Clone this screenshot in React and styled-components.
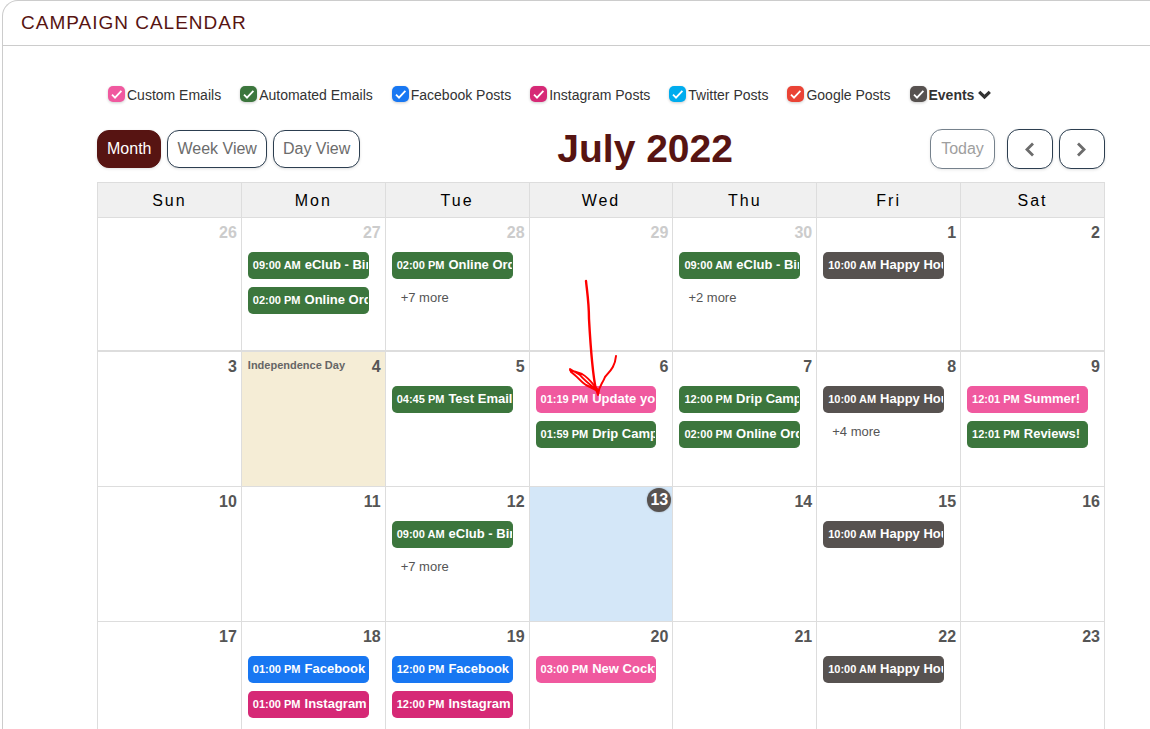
import { useState } from "react";
import styled, { createGlobalStyle } from "styled-components";

const colors = {
  custom: "#f0599f",
  automated: "#3c763d",
  facebook: "#1877f2",
  instagram: "#d62976",
  twitter: "#00acee",
  google: "#ea4335",
  event: "#575250",
};

const GlobalStyle = createGlobalStyle`
  *, *::before, *::after {
    box-sizing: border-box;
  }
  body {
    margin: 0;
    background: #fff;
    color: #333;
    font-family: "Liberation Sans", Arial, sans-serif;
    font-size: 14px;
  }
`;

const Panel = styled.main`
  margin-left: 2px;
  border: solid #ccc;
  border-width: 1px 0 0 1px;
  border-top-left-radius: 16px;
  overflow: hidden;
`;

const PanelHeader = styled.header`
  padding: 0 18px;
  border-bottom: 1px solid #ccc;
`;

const PanelTitle = styled.h1`
  margin: 0;
  color: #571412;
  font-size: 19px;
  font-weight: 400;
  line-height: 44px;
  letter-spacing: 1px;
  text-transform: uppercase;
`;

const Content = styled.div`
  padding: 40px 45px 0 94px;
`;

const Filters = styled.div`
  display: flex;
  gap: 19px;
  padding: 0 11px;
`;

const Filter = styled.label`
  display: flex;
  align-items: center;
  gap: 2px;
  line-height: 18px;
  font-weight: ${(props) => (props.$bold ? 700 : 400)};
  white-space: nowrap;
  cursor: pointer;

  > svg {
    margin-left: 2px;
  }
`;

const CheckBox = styled.span`
  display: grid;
  width: 17px;
  height: 16px;
  margin-bottom: 2px;

  > * {
    grid-area: 1 / 1;
  }
  svg {
    pointer-events: none;
  }
`;

const CheckInput = styled.input`
  appearance: none;
  width: 17px;
  height: 16px;
  margin: 0;
  border-radius: 5px;
  background: ${(props) => props.$color};
  box-shadow: 0 1px 3px rgba(0, 0, 0, 0.2);

  &:not(:checked) {
    background: #fff;
  }
`;

const Toolbar = styled.div`
  display: flex;
  justify-content: space-between;
  align-items: center;
  margin: 25px 0 13px;
`;

const Group = styled.div`
  display: flex;
  gap: 6px;
`;

const NavGroup = styled(Group)`
  gap: 12px;
`;

const Button = styled.button`
  height: 38px;
  padding: 0 9px;
  border: 1px solid ${(props) => (props.$active ? "#571412" : "#2c3e50")};
  border-radius: 12px;
  background: ${(props) => (props.$active ? "#571412" : "#fff")};
  color: ${(props) => (props.$active ? "#fff" : "#6c6c6c")};
  font-family: inherit;
  font-size: 16px;
  box-shadow: 0 1px 3px rgba(0, 0, 0, 0.12);
  cursor: pointer;

  &:disabled {
    opacity: 0.65;
    cursor: default;
  }
`;

const NavButton = styled(Button)`
  display: flex;
  justify-content: center;
  align-items: center;
  height: 40px;
  min-width: ${(props) => (props.$icon ? "46px" : "65px")};
`;

const MonthTitle = styled.h2`
  margin: 0;
  color: #571412;
  font-size: 39px;
  font-weight: 700;
  line-height: 40px;
`;

const Table = styled.table`
  width: 100%;
  table-layout: fixed;
  border-collapse: collapse;
`;

const HeadCell = styled.th`
  height: 35px;
  padding: 1px 0 0;
  border: 1px solid #ddd;
  background: #f0f0f0;
  color: #000;
  font-size: 16px;
  font-weight: 400;
  letter-spacing: 2px;
`;

const Cell = styled.td`
  position: relative;
  height: 135px;
  padding: 0;
  border: 1px solid #ddd;
  background: ${(props) => props.$tint || "#fff"};
  vertical-align: top;
`;

const Week = styled.tr`
  &:first-child > td {
    height: 133px;
    border-bottom-width: 2px;
  }
  &:nth-child(2) > td {
    height: 136px;
  }
`;

const DayHead = styled.div`
  display: flex;
  justify-content: space-between;
  height: 34px;
  padding: 5px 4px 0 6px;
`;

const Holiday = styled.span`
  color: #666;
  font-size: 11px;
  font-weight: 700;
  line-height: 16px;
`;

const DayNumber = styled.span`
  margin-left: auto;
  color: ${(props) => (props.$muted ? "#ccc" : "#555")};
  font-size: 16px;
  font-weight: 700;
  line-height: 20px;
`;

const Today = styled(DayNumber)`
  width: 24px;
  height: 24px;
  margin: -4px -3px 0 auto;
  border-radius: 50%;
  background: #575250;
  box-shadow: 0 0 2px rgba(0, 0, 0, 0.3);
  color: #fff;
  line-height: 24px;
  text-align: center;
`;

const Events = styled.div`
  display: flex;
  flex-direction: column;
  gap: 8px;
  padding: 0 16px 0 6px;
`;

const Event = styled.a`
  display: block;
  overflow: hidden;
  height: 27px;
  padding-left: 5px;
  border-right: 1px solid ${(props) => props.$color};
  border-radius: 5px;
  background: ${(props) => props.$color};
  color: #fff;
  font-size: 13px;
  font-weight: 700;
  line-height: 26px;
  text-decoration: none;
  white-space: nowrap;
`;

const Time = styled.span`
  margin-right: 4px;
  font-size: 11px;
`;

const More = styled.a`
  padding-left: 9px;
  color: #555;
  font-size: 13px;
  line-height: 22px;
  text-decoration: none;
`;

const Arrow = styled.svg`
  position: absolute;
  top: -75px;
  left: 35px;
  z-index: 1;
  pointer-events: none;
`;

const filters = [
  { label: "Custom Emails", color: colors.custom },
  { label: "Automated Emails", color: colors.automated },
  { label: "Facebook Posts", color: colors.facebook },
  { label: "Instagram Posts", color: colors.instagram },
  { label: "Twitter Posts", color: colors.twitter },
  { label: "Google Posts", color: colors.google },
  { label: "Events", color: colors.event, menu: true },
];

const views = ["Month", "Week View", "Day View"];
const weekdays = ["Sun", "Mon", "Tue", "Wed", "Thu", "Fri", "Sat"];

const happyHour = ["event", "10:00 AM", "Happy Hour"];

const weeks = [
  [
    { day: 26, muted: true },
    {
      day: 27,
      muted: true,
      events: [
        ["automated", "09:00 AM", "eClub - Birthday"],
        ["automated", "02:00 PM", "Online Ordering"],
      ],
    },
    {
      day: 28,
      muted: true,
      events: [["automated", "02:00 PM", "Online Ordering"]],
      more: 7,
    },
    { day: 29, muted: true },
    {
      day: 30,
      muted: true,
      events: [["automated", "09:00 AM", "eClub - Birthday"]],
      more: 2,
    },
    { day: 1, events: [happyHour] },
    { day: 2 },
  ],
  [
    { day: 3 },
    { day: 4, holiday: "Independence Day", tint: "#f5edd6" },
    { day: 5, events: [["automated", "04:45 PM", "Test Email"]] },
    {
      day: 6,
      marked: true,
      events: [
        ["custom", "01:19 PM", "Update your"],
        ["automated", "01:59 PM", "Drip Campaign"],
      ],
    },
    {
      day: 7,
      events: [
        ["automated", "12:00 PM", "Drip Campaign"],
        ["automated", "02:00 PM", "Online Ordering"],
      ],
    },
    { day: 8, events: [happyHour], more: 4 },
    {
      day: 9,
      events: [
        ["custom", "12:01 PM", "Summer!"],
        ["automated", "12:01 PM", "Reviews!"],
      ],
    },
  ],
  [
    { day: 10 },
    { day: 11 },
    {
      day: 12,
      events: [["automated", "09:00 AM", "eClub - Birthday"]],
      more: 7,
    },
    { day: 13, today: true, tint: "#d4e7f8" },
    { day: 14 },
    { day: 15, events: [happyHour] },
    { day: 16 },
  ],
  [
    { day: 17 },
    {
      day: 18,
      events: [
        ["facebook", "01:00 PM", "Facebook"],
        ["instagram", "01:00 PM", "Instagram"],
      ],
    },
    {
      day: 19,
      events: [
        ["facebook", "12:00 PM", "Facebook"],
        ["instagram", "12:00 PM", "Instagram"],
      ],
    },
    { day: 20, events: [["custom", "03:00 PM", "New Cocktails"]] },
    { day: 21 },
    { day: 22, events: [happyHour] },
    { day: 23 },
  ],
];

const ChevronDown = () => (
  <svg width="13" height="10" viewBox="0 0 13 10" fill="none" aria-hidden="true">
    <path d="M1.2 1.8 6.5 7 11.8 1.8" stroke="#333" strokeWidth="3.2" />
  </svg>
);

const Chevron = ({ d }) => (
  <svg width="11" height="15" viewBox="0 0 11 15" fill="none" aria-hidden="true">
    <path d={d} stroke="#6c6c6c" strokeWidth="2.8" />
  </svg>
);

const FilterItem = ({ label, color, menu }) => (
  <Filter $bold={menu}>
    <CheckBox>
      <CheckInput type="checkbox" defaultChecked $color={color} />
      <svg width="17" height="16" viewBox="0 0 17 16" fill="none">
        <path d="M4 8.6 7 11.6 13.4 4.8" stroke="#fff" strokeWidth="1.8" />
      </svg>
    </CheckBox>
    {label}
    {menu && <ChevronDown />}
  </Filter>
);

const MarkArrow = () => (
  <Arrow
    width="60"
    height="122"
    viewBox="0 0 60 122"
    fill="none"
    stroke="#fe0000"
    strokeWidth="2"
    strokeLinecap="round"
    strokeLinejoin="round"
    aria-hidden="true"
  >
    <path d="M21 4C22 14 24 26 24 42C25 60 27 94 31 113" strokeWidth="2.4" />
    <path d="M51 79C50 90 45 94 40 100C37 108 34 108 33 118L31 112" />
    <path d="M33 114C24 107 18 102 15 98C12 96 8 94 5 92L6 95C12 99 16 105 21 108L33 114M5 93L17 97C24 101 27 106 32 112" />
  </Arrow>
);

const Day = ({ day, muted, today, tint, holiday, marked, events = [], more }) => (
  <Cell $tint={tint}>
    <DayHead>
      {holiday && <Holiday>{holiday}</Holiday>}
      {today ? <Today>{day}</Today> : <DayNumber $muted={muted}>{day}</DayNumber>}
    </DayHead>
    <Events>
      {events.map(([type, time, title]) => (
        <Event key={time + title} href="#" $color={colors[type]}>
          <Time>{time}</Time>
          {title}
        </Event>
      ))}
      {more && <More href="#">{`+${more} more`}</More>}
    </Events>
    {marked && <MarkArrow />}
  </Cell>
);

const App = () => {
  const [view, setView] = useState("Month");

  return (
    <>
      <GlobalStyle />
      <Panel>
        <PanelHeader>
          <PanelTitle>Campaign Calendar</PanelTitle>
        </PanelHeader>
        <Content>
          <Filters>
            {filters.map((filter) => (
              <FilterItem key={filter.label} {...filter} />
            ))}
          </Filters>
          <Toolbar>
            <Group>
              {views.map((name) => (
                <Button
                  key={name}
                  $active={view === name}
                  onClick={() => setView(name)}
                >
                  {name}
                </Button>
              ))}
            </Group>
            <MonthTitle>July 2022</MonthTitle>
            <NavGroup>
              <NavButton disabled>Today</NavButton>
              <Group>
                <NavButton $icon aria-label="Previous month">
                  <Chevron d="M9 1.5 3 7.5 9 13.5" />
                </NavButton>
                <NavButton $icon aria-label="Next month">
                  <Chevron d="M2 1.5 8 7.5 2 13.5" />
                </NavButton>
              </Group>
            </NavGroup>
          </Toolbar>
          <Table>
            <thead>
              <tr>
                {weekdays.map((name) => (
                  <HeadCell key={name} scope="col">
                    {name}
                  </HeadCell>
                ))}
              </tr>
            </thead>
            <tbody>
              {weeks.map((days) => (
                <Week key={days[0].day}>
                  {days.map((item) => (
                    <Day key={item.day} {...item} />
                  ))}
                </Week>
              ))}
            </tbody>
          </Table>
        </Content>
      </Panel>
    </>
  );
};

export default App;
